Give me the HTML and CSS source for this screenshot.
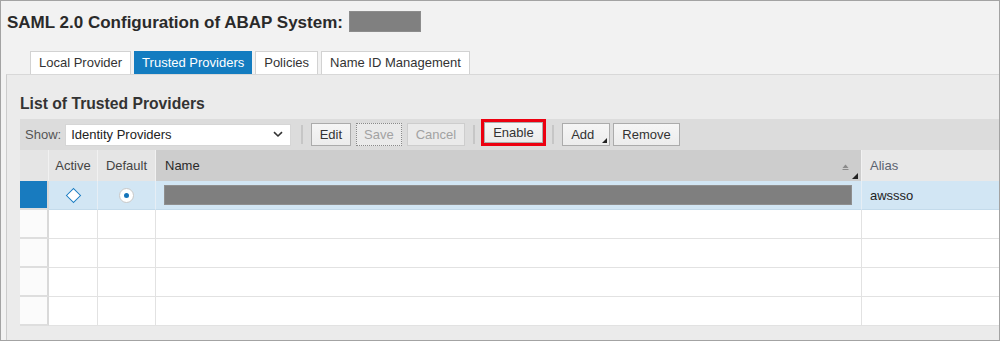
FILE: index.html
```html
<!DOCTYPE html>
<html>
<head>
<meta charset="utf-8">
<link rel="stylesheet" href="styles.css">
</head>
<body>
<div class="frame">
  <div class="titlebar">
    <h1 class="title">SAML 2.0 Configuration of ABAP System:</h1>
    <span class="redact-sys"></span>
  </div>
  <div class="tabs">
    <div class="tab">Local Provider</div>
    <div class="tab tab-active">Trusted Providers</div>
    <div class="tab">Policies</div>
    <div class="tab">Name ID Management</div>
  </div>
  <div class="panel">
    <h2 class="heading">List of Trusted Providers</h2>
    <div class="toolbar">
      <span class="show-label">Show:</span>
      <div class="select">
        <span>Identity Providers</span>
        <svg class="chev" width="10" height="7" viewBox="0 0 10 7"><path d="M1 1.2 L5 5 L9 1.2" fill="none" stroke="#333" stroke-width="1.6"/></svg>
      </div>
      <span class="sep"></span>
      <button class="btn">Edit</button>
      <button class="btn btn-disabled btn-focus">Save</button>
      <button class="btn btn-disabled">Cancel</button>
      <span class="sep sep-enable"></span>
      <span class="highlight"><button class="btn btn-enable">Enable</button></span>
      <span class="sep sep-add"></span>
      <button class="btn btn-menu">Add<span class="corner"></span></button>
      <button class="btn btn-remove">Remove</button>
    </div>
    <div class="grid">
      <div class="row row-head">
        <div class="cell sel-head"></div>
        <div class="cell head center">Active</div>
        <div class="cell head center">Default</div>
        <div class="cell head head-sorted">Name
          <svg class="sort" width="7" height="6" viewBox="0 0 7 6"><path d="M3.5 0.5 L6.5 4 L0.5 4 Z" fill="#8a8a8a"/><rect x="0.5" y="5" width="6" height="1" fill="#8a8a8a"/></svg>
          <span class="corner corner-head"></span>
        </div>
        <div class="cell head head-alias">Alias</div>
      </div>
      <div class="row row-selected">
        <div class="cell sel sel-on"></div>
        <div class="cell center"><span class="diamond"></span></div>
        <div class="cell center"><span class="radio"><span class="dot"></span></span></div>
        <div class="cell name-cell"><span class="redact-name"></span></div>
        <div class="cell alias-cell">awssso</div>
      </div>
      <div class="row">
        <div class="cell sel"></div><div class="cell"></div><div class="cell"></div><div class="cell"></div><div class="cell"></div>
      </div>
      <div class="row">
        <div class="cell sel"></div><div class="cell"></div><div class="cell"></div><div class="cell"></div><div class="cell"></div>
      </div>
      <div class="row">
        <div class="cell sel"></div><div class="cell"></div><div class="cell"></div><div class="cell"></div><div class="cell"></div>
      </div>
      <div class="row">
        <div class="cell sel"></div><div class="cell"></div><div class="cell"></div><div class="cell"></div><div class="cell"></div>
      </div>
    </div>
  </div>
</div>
</body>
</html>
```

FILE: styles.css
```css
html, body {
  margin: 0;
  padding: 0;
  background: #ffffff;
}
body {
  font-family: "Liberation Sans", Arial, sans-serif;
  color: #333333;
}
.frame {
  width: 1000px;
  height: 341px;
  box-sizing: border-box;
  border: 1px solid #a3a3a3;
  background: #f2f2f2;
  display: flex;
  flex-direction: column;
  overflow: hidden;
}
.titlebar {
  height: 50px;
  box-sizing: border-box;
  padding: 11px 0 0 6px;
  display: flex;
  align-items: flex-start;
  gap: 6px;
  flex: none;
}
.title {
  margin: 0;
  font-size: 17px;
  line-height: 22px;
  font-weight: bold;
  color: #2a2a2a;
  white-space: nowrap;
}
.redact-sys {
  display: block;
  width: 72px;
  height: 21px;
  margin-top: -1px;
  background: #808080;
  box-shadow: inset 0 0 0 1px #8c8c8c;
}
.tabs {
  display: flex;
  gap: 3px;
  padding-left: 29px;
  height: 23px;
  flex: none;
}
.tab {
  box-sizing: border-box;
  height: 23px;
  padding: 0 8px;
  border: 1px solid #d2d2d2;
  border-bottom: none;
  background: #ffffff;
  font-size: 13px;
  line-height: 22px;
  color: #333333;
  white-space: nowrap;
}
.tab-active {
  background: #137cc0;
  border-color: #137cc0;
  color: #ffffff;
  padding: 0 7px;
}
.panel {
  flex: 1;
  margin-left: 5px;
  border-top: 1px solid #d8d8d8;
  border-left: 1px solid #cccccc;
  background: #ebebeb;
  padding-left: 13px;
  overflow: hidden;
  display: flex;
  flex-direction: column;
}
.heading {
  margin: 20px 0 6px 0;
  font-size: 15.7px;
  line-height: 18px;
  font-weight: bold;
  color: #333333;
  white-space: nowrap;
}
.toolbar {
  height: 31px;
  flex: none;
  background: #dcdcdc;
  display: flex;
  align-items: center;
  padding-left: 5px;
  white-space: nowrap;
}
.show-label {
  font-size: 13px;
  color: #555555;
  margin-right: 4px;
}
.select {
  box-sizing: border-box;
  width: 226px;
  height: 22px;
  background: #ffffff;
  border: 1px solid #d6d6d6;
  display: flex;
  align-items: center;
  justify-content: space-between;
  padding: 0 7px 0 5px;
  font-size: 13px;
  color: #222222;
}
.chev {
  display: block;
}
.sep {
  display: block;
  width: 2px;
  height: 19px;
  background: #c6c6c6;
  margin: 0 8px 0 10px;
}
.sep-enable {
  margin: 0 6px 0 3px;
}
.sep-add {
  margin: 0 8px 0 6px;
}
.btn {
  box-sizing: border-box;
  height: 23px;
  margin: 0 5px 0 0;
  padding: 0 7.5px;
  border: 1px solid #ababab;
  background: linear-gradient(#f6f6f6, #ececec);
  font-family: "Liberation Sans", Arial, sans-serif;
  font-size: 13px;
  line-height: 21px;
  color: #333333;
  position: relative;
  white-space: nowrap;
}
.btn-disabled {
  color: #a2a2a2;
  border-color: #cdcdcd;
  background: #eaeaea;
}
.btn-focus {
  border: 1px dotted #8a8a8a;
}
.highlight {
  display: block;
  align-self: flex-start;
  box-sizing: border-box;
  border: 3px solid #ec0010;
  padding: 0;
  height: 27px;
}
.btn-enable {
  display: block;
  height: 21px;
  line-height: 19px;
  margin: 0;
  padding: 0 8.5px;
}
.btn-menu {
  padding: 0 15px 0 8px;
  margin-right: 3px;
}
.btn-remove {
  padding: 0 8px;
}
.corner {
  position: absolute;
  right: 2px;
  bottom: 2px;
  width: 0;
  height: 0;
  border-style: solid;
  border-width: 0 0 5px 5px;
  border-color: transparent transparent #222222 transparent;
}
.grid {
  display: flex;
  flex-direction: column;
  width: 1042px;
}
.row {
  display: grid;
  grid-template-columns: 29px 49px 58px 706px 200px;
  height: 29px;
}
.row-head {
  height: 31px;
}
.cell {
  box-sizing: border-box;
  border-right: 1px solid #e2e2e2;
  border-bottom: 1px solid #e2e2e2;
  background: #ffffff;
  font-size: 13px;
  display: flex;
  align-items: center;
  position: relative;
}
.center {
  justify-content: center;
}
.sel {
  background: #fbfbfb;
  border-right: 2px solid #d9d9d9;
  border-bottom: 2px solid #dedede;
}
.sel-head {
  background: #e5e5e5;
  border-right: 1px solid #f1f1f1;
  border-bottom: none;
}
.head {
  background: #e5e5e5;
  border-right: 1px solid #f1f1f1;
  border-bottom: none;
  color: #444444;
  font-size: 13px;
}
.head-sorted {
  background: #cdcdcd;
  padding-left: 9px;
  color: #2a2a2a;
}
.sort {
  position: absolute;
  right: 12px;
  top: 14px;
}
.corner-head {
  right: 3px;
  bottom: 2px;
  border-width: 0 0 6px 6px;
}
.head-alias {
  background: #e8e8e8;
  padding-left: 8px;
  color: #5b6270;
}
.row-selected .cell {
  background: #d2e6f4;
  border-bottom-color: #c4dbeb;
  border-right-color: #e6eef5;
}
.row-selected .sel-on {
  background: #187bbf;
  border-right: 2px solid #d9d9d9;
  border-bottom: 2px solid #dedede;
}
.diamond {
  display: block;
  width: 9px;
  height: 9px;
  background: #ffffff;
  border: 1px solid #1f7fc4;
  transform: rotate(45deg);
}
.radio {
  display: flex;
  align-items: center;
  justify-content: center;
  width: 13px;
  height: 13px;
  border-radius: 50%;
  background: #ffffff;
  border: 1px solid #c8c8c8;
}
.dot {
  display: block;
  width: 5px;
  height: 5px;
  border-radius: 50%;
  background: #1575ba;
}
.name-cell {
  padding: 0 9px 0 8px;
}
.redact-name {
  display: block;
  width: 688px;
  height: 20px;
  box-sizing: border-box;
  background: #7f7f7f;
  border: 1px solid #8f8f8f;
}
.alias-cell {
  padding-left: 8px;
  color: #222222;
  font-size: 13px;
}
```
